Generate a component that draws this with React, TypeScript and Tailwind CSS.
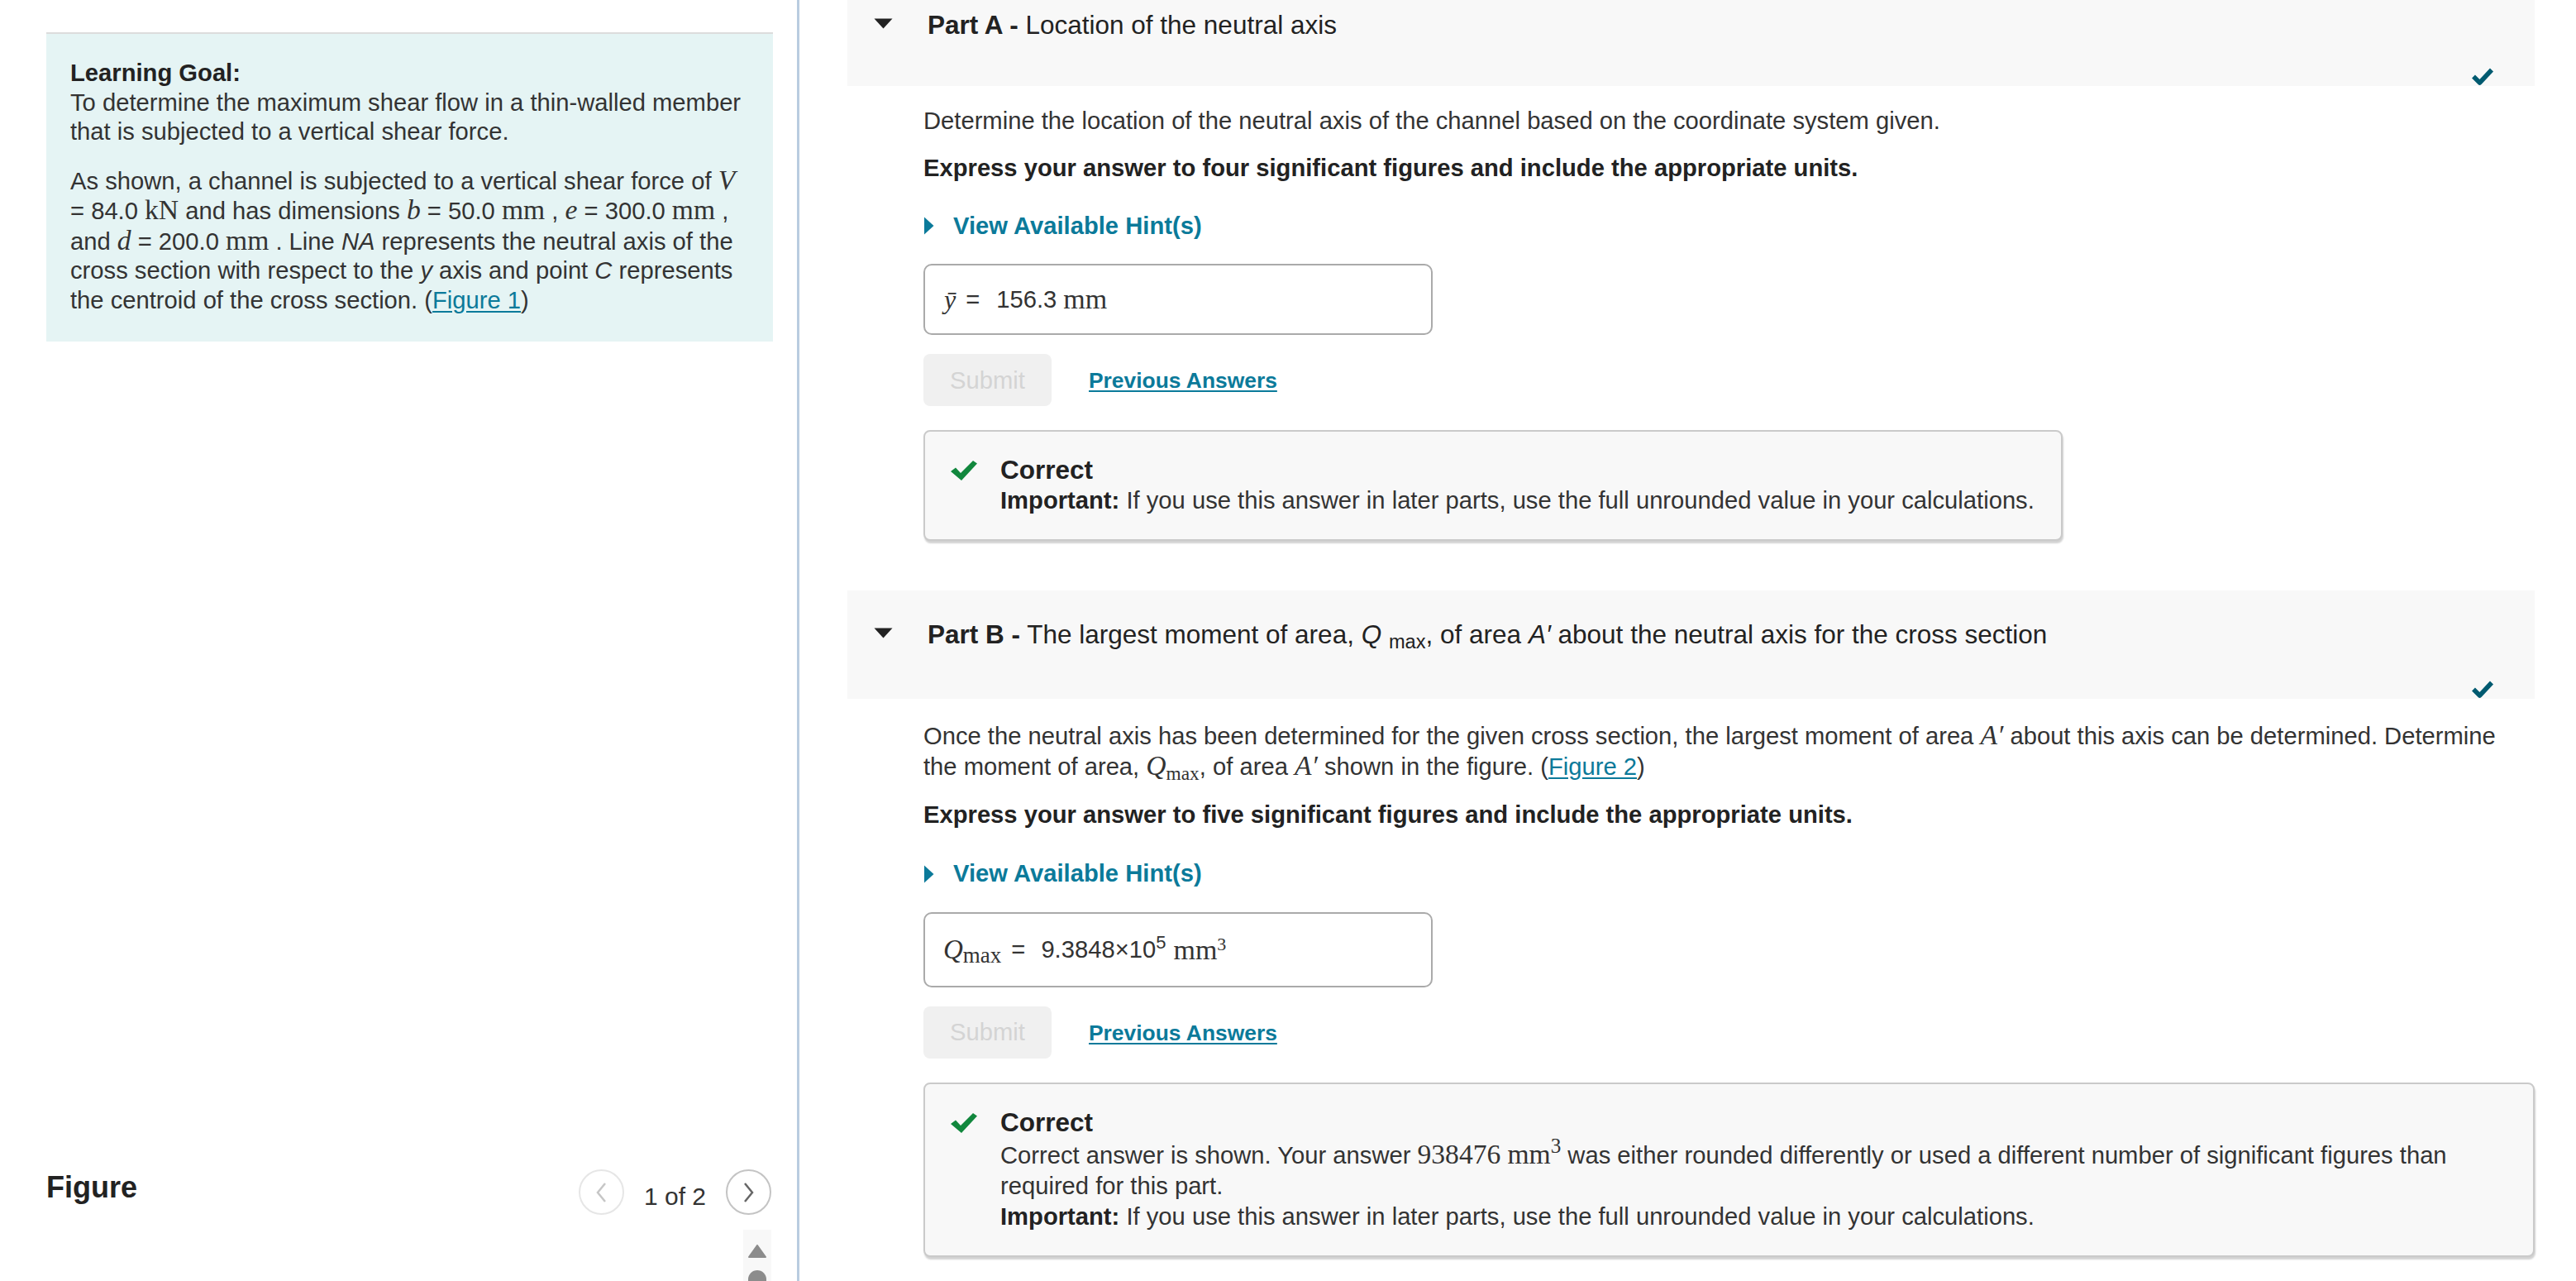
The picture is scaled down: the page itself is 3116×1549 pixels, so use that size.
import type { ReactNode } from "react";

const MATH = "font-['Liberation_Serif','DejaVu_Serif',serif]";

// inline math pieces, roughly the way the typeset formulas render
function Var({ children }: { children: ReactNode }) {
  return <span className={`${MATH} italic text-[1.15em] leading-none`}>{children}</span>;
}

function Unit({ children }: { children: ReactNode }) {
  return <span className={`${MATH} text-[1.15em] leading-none`}>{children}</span>;
}

function Link({ children }: { children: ReactNode }) {
  return <a className="cursor-pointer text-[#0b7a9a] underline underline-offset-[3px]">{children}</a>;
}

function HeaderCheck() {
  return (
    <svg width="28" height="22" viewBox="0 0 28 22" className="absolute right-[49px] bottom-[1px]">
      <path d="M3 11.5l7.5 7.5L25 3.5" fill="none" stroke="#005a70" strokeWidth="5.5" strokeLinejoin="round" />
    </svg>
  );
}

function GreenCheck() {
  return (
    <svg width="32" height="24" viewBox="0 0 32 24" className="mt-[7px] shrink-0">
      <path d="M0 13L6 8.5l6 6.5L27 0l5 3.5L13 24z" fill="#11873d" />
    </svg>
  );
}

function PartHeader({ title, tall }: { title: ReactNode; tall?: boolean }) {
  return (
    <div className={`relative bg-[#f8f8f8] pl-[32px] ${tall ? "h-[131px] pt-[33px]" : "h-[104px] pt-[10px]"}`}>
      <div className="flex items-center">
        <svg width="23" height="13" viewBox="0 0 23 13" className="mb-[3px] shrink-0">
          <path d="M0.5 0.5h22L11.5 12.5z" fill="#222" />
        </svg>
        <h2 className="ml-[42px] text-[31.5px] leading-[40px] text-[#222]">{title}</h2>
      </div>
      <HeaderCheck />
    </div>
  );
}

function HintToggle() {
  return (
    <div className="mt-[34px] flex items-center gap-[23px] text-[#0b7a9a]">
      <svg width="13" height="22" viewBox="0 0 13 22" className="shrink-0">
        <path d="M1 0.5l11.5 10.5L1 21.5z" fill="#0b7a9a" />
      </svg>
      <span className="font-bold">View Available Hint(s)</span>
    </div>
  );
}

function SubmitRow() {
  return (
    <div className="mt-[23px] flex items-center gap-[45px]">
      <button className="h-[63px] w-[155px] rounded-[8px] bg-[#f0f0f0] text-[#d4d4d4]">Submit</button>
      <Link>
        <span className="text-[26.4px] font-bold">Previous Answers</span>
      </Link>
    </div>
  );
}

function CorrectBox({ children, full }: { children: ReactNode; full?: boolean }) {
  return (
    <div
      className={`mt-[29px] rounded-[8px] border-2 border-[#cacaca] bg-[#f8f8f8] pt-[28px] pr-[32px] pb-[28px] pl-[31px] shadow-[1px_3px_2px_rgba(0,0,0,0.18)] ${full ? "w-full" : "w-fit"}`}
    >
      <div className="flex gap-[28px]">
        <GreenCheck />
        <div className="leading-[37px]">
          <div className="text-[31.5px] font-bold text-[#222]">Correct</div>
          {children}
        </div>
      </div>
    </div>
  );
}

function Important() {
  return (
    <p>
      <b className="text-[#222]">Important:</b> If you use this answer in later parts, use the full unrounded value in
      your calculations.
    </p>
  );
}

function Pager() {
  return (
    <div className="mt-[10px] flex items-center">
      <button className="mb-[10px] flex h-[55px] w-[55px] items-center justify-center rounded-full border-2 border-[#e6e6e6]">
        <svg width="14" height="26" viewBox="0 0 14 26">
          <path d="M12 2L3 13l9 11" fill="none" stroke="#c6c6c6" strokeWidth="2.5" />
        </svg>
      </button>
      <span className="mx-[24px] text-[30px] text-[#333]">1 of 2</span>
      <button className="mb-[10px] flex h-[55px] w-[55px] items-center justify-center rounded-full border-2 border-[#c4c4c4]">
        <svg width="14" height="26" viewBox="0 0 14 26">
          <path d="M2 2l9 11-9 11" fill="none" stroke="#666" strokeWidth="2.5" />
        </svg>
      </button>
    </div>
  );
}

export default function App() {
  return (
    <div className="flex h-[1549px] w-[3116px] overflow-hidden bg-white font-['Liberation_Sans',Arial,sans-serif] text-[29.2px] text-[#333]">
      {/* intro + figure column */}
      <aside className="flex w-[964px] shrink-0 flex-col pr-[29px] pl-[56px]">
        <section className="mt-[39px] border-t-2 border-[#dcdcdc] bg-[#e5f4f4] pt-[30px] pr-[22px] pb-[32px] pl-[29px] leading-[35.5px]">
          <h3 className="font-bold text-[#222]">Learning Goal:</h3>
          <p>To determine the maximum shear flow in a thin-walled member that is subjected to a vertical shear force.</p>
          <p className="mt-[23px]">
            As shown, a channel is subjected to a vertical shear force of <Var>V</Var> = 84.0 <Unit>kN</Unit> and has
            dimensions <Var>b</Var> = 50.0 <Unit>mm</Unit> , <Var>e</Var> = 300.0 <Unit>mm</Unit> , and <Var>d</Var> =
            200.0 <Unit>mm</Unit> . Line <i>NA</i> represents the neutral axis of the cross section with respect to the{" "}
            <i>y</i> axis and point <i>C</i> represents the centroid of the cross section. (<Link>Figure 1</Link>)
          </p>
        </section>

        <div className="mt-auto mr-[2px] flex h-[135px] flex-col">
          <div className="flex h-[55px] items-center justify-between">
            <h3 className="mb-[12px] text-[36px] font-bold text-[#222]">Figure</h3>
            <Pager />
          </div>
          <div className="mt-[18px] h-[2px] bg-[#dedede]" />
          <div className="flex flex-1 justify-end">
            <div className="flex w-[34px] flex-col items-center bg-[#f8f8f8] pt-[18px]">
              <svg width="22" height="16" viewBox="0 0 22 16">
                <path d="M11 1L21 15H1z" fill="#8c8c8c" strokeLinejoin="round" stroke="#8c8c8c" strokeWidth="2" />
              </svg>
              <div className="mt-[15px] h-[20px] w-[22px] rounded-t-full bg-[#8c8c8c]" />
            </div>
          </div>
        </div>
      </aside>

      <div className="w-[3px] shrink-0 bg-[#b9cce0]" />

      {/* question parts */}
      <main className="flex-1 pr-[50px] pl-[58px]">
        <PartHeader
          title={
            <>
              <b>Part A -</b> Location of the neutral axis
            </>
          }
        />
        <div className="pl-[92px] leading-[36px]">
          <p className="mt-[24px]">
            Determine the location of the neutral axis of the channel based on the coordinate system given.
          </p>
          <p className="mt-[21px] font-bold text-[#222]">
            Express your answer to four significant figures and include the appropriate units.
          </p>
          <HintToggle />
          <div className="mt-[28px] flex h-[86px] w-[616px] items-center rounded-[10px] border-2 border-[#aaa] pl-[23px]">
            <span className={`${MATH} text-[32px] italic`}>ȳ</span>
            <span className="ml-[12px]">=</span>
            <span className="ml-[20px]">156.3</span>
            <span className={`${MATH} ml-[8px] text-[34px]`}>mm</span>
          </div>
          <SubmitRow />
          <CorrectBox>
            <Important />
          </CorrectBox>
        </div>

        <div className="mt-[60px]">
          <PartHeader
            tall
            title={
              <>
                <b>Part B -</b> The largest moment of area, <i>Q</i> <sub>max</sub>, of area <i>A′</i> about the
                neutral axis for the cross section
              </>
            }
          />
        </div>
        <div className="pl-[92px] leading-[37px]">
          <p className="mt-[27px]">
            Once the neutral axis has been determined for the given cross section, the largest moment of area{" "}
            <Var>A′</Var> about this axis can be determined. Determine the moment of area,{" "}
            <Var>Q</Var>
            <sub className={`${MATH} text-[0.8em]`}>max</sub>, of area <Var>A′</Var> shown in the figure. (
            <Link>Figure 2</Link>)
          </p>
          <p className="mt-[21px] font-bold text-[#222]">
            Express your answer to five significant figures and include the appropriate units.
          </p>
          <HintToggle />
          <div className="mt-[28px] flex h-[91px] w-[616px] items-center rounded-[10px] border-2 border-[#aaa] pl-[22px]">
            <span className={`${MATH} text-[33px] italic`}>Q</span>
            <sub className={`${MATH} text-[27px]`}>max</sub>
            <span className="ml-[12px]">=</span>
            <span className="ml-[19px]">
              9.3848×10<sup className="text-[22px]">5</sup>
            </span>
            <span className={`${MATH} ml-[9px] text-[34px]`}>
              mm<sup className="text-[22px]">3</sup>
            </span>
          </div>
          <SubmitRow />
          <CorrectBox full>
            <p className="mt-[3px]">
              Correct answer is shown. Your answer <Unit>938476</Unit>{" "}
              <Unit>
                mm<sup>3</sup>
              </Unit>{" "}
              was either rounded differently or used a different number of significant figures than required for this
              part.
            </p>
            <Important />
          </CorrectBox>
        </div>
      </main>
    </div>
  );
}
